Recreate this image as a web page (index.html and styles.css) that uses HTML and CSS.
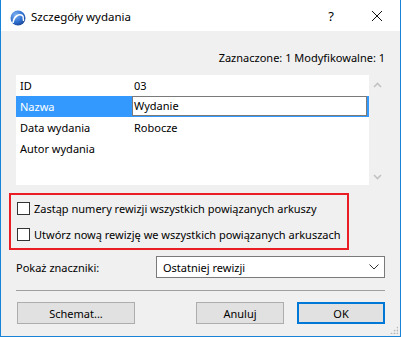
FILE: index.html
```html
<!DOCTYPE html>
<html lang="pl">
    <head>
        <meta charset="UTF-8" />
        <meta name="viewport" content="width=device-width, initial-scale=1.0" />
        <link rel="stylesheet" href="styles.css">
        <title>Szczegóły wydania</title>
    </head>
    <body>
        <div class="window">
            <header class="titlebar">
                <svg class="app-icon" width="16" height="16" viewBox="0 0 16 16">
                    <defs>
                        <radialGradient id="ball" cx="0.35" cy="0.3" r="0.8">
                            <stop offset="0" stop-color="#7fb2f0" />
                            <stop offset="0.6" stop-color="#2f6fd0" />
                            <stop offset="1" stop-color="#1a3f8a" />
                        </radialGradient>
                    </defs>
                    <circle cx="8" cy="8" r="7.5" fill="url(#ball)" />
                    <path d="M3 13 C4 6 9 3 13 6" fill="none" stroke="#fff" stroke-width="1.6" />
                    <path d="M13 6 L13.5 11" fill="none" stroke="#fff" stroke-width="1.4" />
                </svg>
                <h1 class="title">Szczegóły wydania</h1>
                <span class="title-btn help">?</span>
                <span class="title-btn close">
                    <svg width="12" height="12" viewBox="0 0 12 12">
                        <path d="M1 1 L11 11 M11 1 L1 11" stroke="#111" stroke-width="1" />
                    </svg>
                </span>
            </header>

            <main class="content">
                <p class="counts">Zaznaczone: 1 Modyfikowalne: 1</p>

                <section class="list-wrap">
                    <div class="list">
                        <div class="row">
                            <span class="label">ID</span>
                            <span class="value">03</span>
                        </div>
                        <div class="row selected">
                            <span class="label">Nazwa</span>
                            <span class="edit">Wydanie</span>
                        </div>
                        <div class="row">
                            <span class="label">Data wydania</span>
                            <span class="value">Robocze</span>
                        </div>
                        <div class="row">
                            <span class="label">Autor wydania</span>
                            <span class="value"></span>
                        </div>
                    </div>
                    <div class="scrollbar">
                        <svg width="9" height="6" viewBox="0 0 9 6"><path d="M1 5 L4.5 1.5 L8 5" fill="none" stroke="#c2c2c2" stroke-width="1.6" /></svg>
                        <svg width="9" height="6" viewBox="0 0 9 6"><path d="M1 1 L4.5 4.5 L8 1" fill="none" stroke="#c2c2c2" stroke-width="1.6" /></svg>
                    </div>
                </section>

                <section class="options">
                    <label class="check"><span class="box"></span>Zastąp numery rewizji wszystkich powiązanych arkuszy</label>
                    <label class="check"><span class="box"></span>Utwórz nową rewizję we wszystkich powiązanych arkuszach</label>
                </section>

                <div class="markers">
                    <span>Pokaż znaczniki:</span>
                    <div class="combo">
                        <span>Ostatniej rewizji</span>
                        <svg width="10" height="6" viewBox="0 0 10 6"><path d="M0.5 0.5 L5 5 L9.5 0.5" fill="none" stroke="#333" stroke-width="1" /></svg>
                    </div>
                </div>

                <hr class="separator" />

                <footer class="buttons">
                    <button class="btn wide">Schemat...</button>
                    <button class="btn push">Anuluj</button>
                    <button class="btn default">OK</button>
                </footer>
            </main>
            <div class="grip"></div>
        </div>
    </body>
</html>
```

FILE: styles.css
```css
* {
    margin: 0;
    padding: 0;
    box-sizing: border-box;
}
:root {
    --frame: #1883d7;
    --face: #f0f0f0;
    --text: #000;
    --select: #3399ff;
    --font-fam: 'Segoe UI', 'Noto Sans', 'Liberation Sans', sans-serif;
}
body {
    background-color: #fff;
    font-family: var(--font-fam);
    font-size: 11px;
    color: var(--text);
}

.window {
    position: relative;
    width: 401px;
    height: 337px;
    border: 1px solid var(--frame);
    border-top: none;
    background-color: var(--face);
    display: flex;
    flex-direction: column;
}

/* ======= title bar ======= */
.titlebar {
    height: 31px;
    background-color: #fff;
    display: flex;
    align-items: center;
    padding-left: 9px;
}
.app-icon {
    margin-top: 4px;
}
.title {
    font-size: 11.5px;
    font-weight: 400;
    margin-left: 5px;
    margin-top: 2px;
    flex: 1;
}
.title-btn {
    display: flex;
    justify-content: center;
    align-items: center;
    width: 46px;
    height: 31px;
}
.help {
    font-size: 13px;
}
.close svg {
    display: block;
}

/* ======= content ======= */
.content {
    flex: 1;
    padding: 0 15px 0 15px;
    display: flex;
    flex-direction: column;
}
.counts {
    text-align: right;
    margin-top: 19px;
    line-height: 16px;
}

.list-wrap {
    display: flex;
    margin-top: 9px;
    height: 110px;
}
.list {
    width: 353px;
    background-color: #fff;
}
.row {
    display: flex;
    height: 21px;
    align-items: center;
}
.label {
    width: 116px;
    padding-left: 4px;
}
.value {
    padding-left: 2px;
}
.row.selected {
    background-color: var(--select);
    align-items: flex-start;
}
.row.selected .label {
    color: #fff;
    line-height: 21px;
}
.edit {
    width: 235px;
    height: 20px;
    background-color: #fff;
    border: 1px solid #7a7a7a;
    padding-left: 1px;
    line-height: 18px;
}
.scrollbar {
    width: 16px;
    display: flex;
    flex-direction: column;
    justify-content: space-between;
    align-items: center;
    padding: 7px 0 5px;
}
.scrollbar svg {
    display: block;
}

/* ======= options ======= */
.options {
    margin: 8px 36px 0 -7px;
    height: 57px;
    border: 2px solid #ea1c24;
    display: flex;
    flex-direction: column;
    justify-content: space-around;
    padding-left: 6px;
}
.check {
    display: flex;
    align-items: center;
    gap: 4px;
    white-space: nowrap;
}
.box {
    width: 13px;
    height: 13px;
    border: 1px solid #333;
    background-color: #fff;
}

.markers {
    display: flex;
    align-items: center;
    justify-content: space-between;
    margin-top: 6px;
}
.combo {
    width: 229px;
    height: 22px;
    border: 1px solid #7a7a7a;
    background-color: #fff;
    display: flex;
    align-items: center;
    justify-content: space-between;
    padding: 0 5px 0 6px;
}

.separator {
    border: none;
    border-top: 1px solid #a0a0a0;
    margin-top: 12px;
}

/* ======= buttons ======= */
.buttons {
    display: flex;
    margin-top: 11px;
    padding-left: 1px;
}
.btn {
    font-family: var(--font-fam);
    font-size: 11px;
    height: 22px;
    background-color: #e1e1e1;
    border: 1px solid #adadad;
    color: #000;
}
.wide {
    width: 118px;
}
.push {
    width: 88px;
    margin-left: auto;
}
.default {
    width: 88px;
    margin-left: 13px;
    border: 2px solid #0078d7;
}

.grip {
    position: absolute;
    right: 2px;
    bottom: 2px;
    width: 8px;
    height: 8px;
    background-image: radial-gradient(circle, #b4b4b4 0.8px, transparent 1.1px);
    background-size: 3px 3px;
    clip-path: polygon(100% 0, 100% 100%, 0 100%);
}
```
